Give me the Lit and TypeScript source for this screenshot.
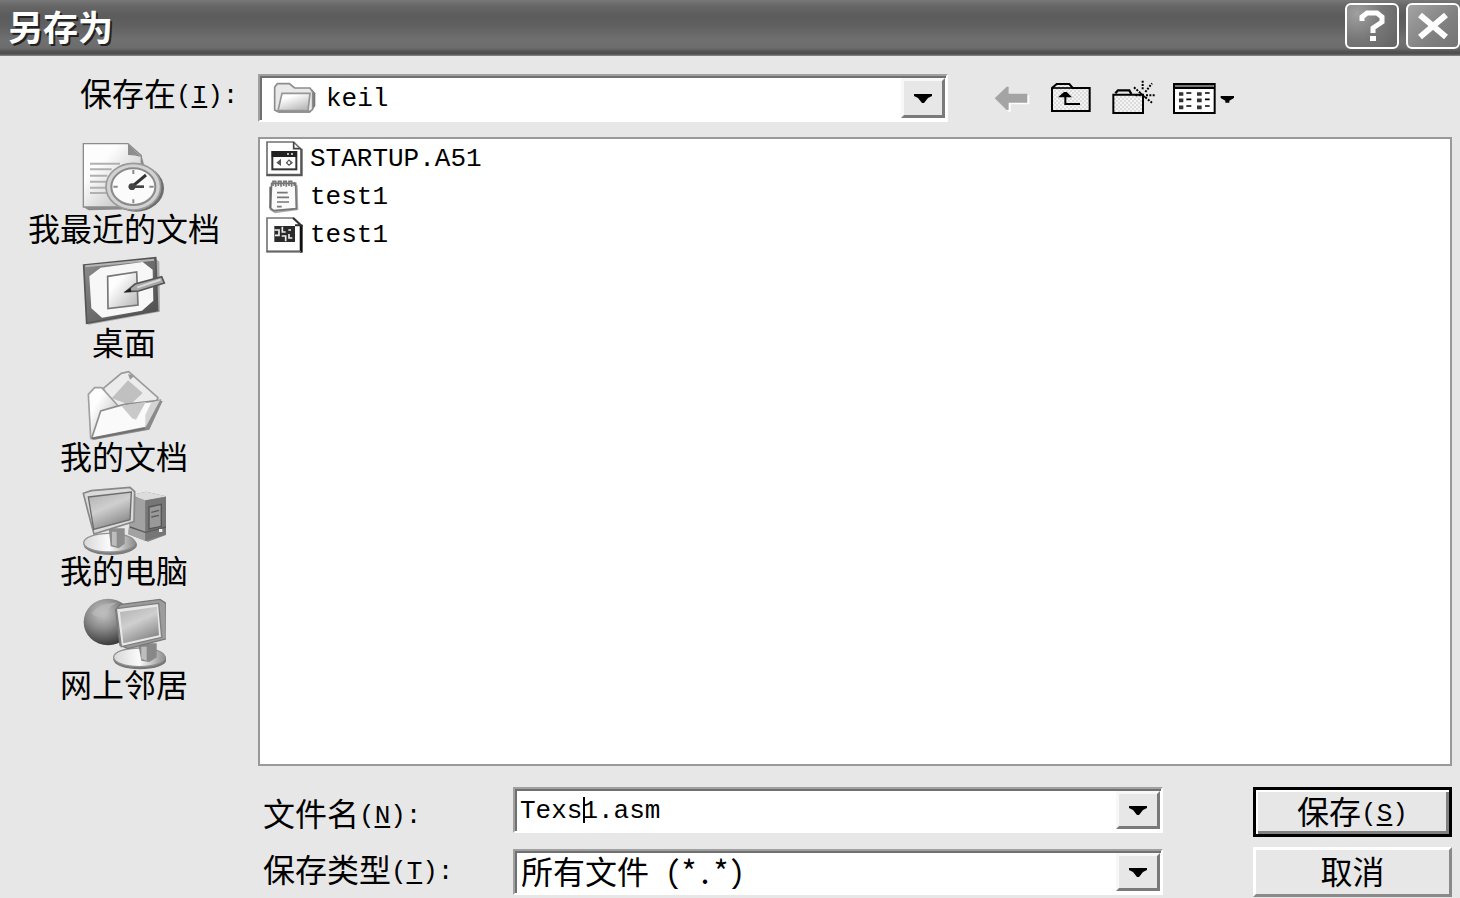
import { LitElement, html, svg, css } from "lit";
import { customElement, property } from "lit/decorators.js";

const shades = svg`
  <defs>
    <linearGradient id="paper" x1="0" y1="0" x2="1" y2="1"><stop offset="0.3" stop-color="#fdfdfd"/><stop offset="1" stop-color="#b4b4b4"/></linearGradient>
    <linearGradient id="screen" x1="0" y1="0" x2="0.5" y2="1"><stop offset="0" stop-color="#b0b0b0"/><stop offset="0.5" stop-color="#cfcfcf"/><stop offset="1" stop-color="#8c8c8c"/></linearGradient>
    <linearGradient id="metal" x1="0" y1="0" x2="1" y2="0"><stop offset="0" stop-color="#d8d8d8"/><stop offset="0.5" stop-color="#fafafa"/><stop offset="1" stop-color="#8e8e8e"/></linearGradient>
    <radialGradient id="globe" cx="0.4" cy="0.3" r="0.7"><stop offset="0" stop-color="#c8c8c8"/><stop offset="0.5" stop-color="#8a8a8a"/><stop offset="1" stop-color="#3c3c3c"/></radialGradient>
    <linearGradient id="pad" x1="0" y1="0" x2="1" y2="1"><stop offset="0" stop-color="#8e8e8e"/><stop offset="1" stop-color="#4a4a4a"/></linearGradient>
    <pattern id="dots" width="12" height="12" patternUnits="userSpaceOnUse"><rect width="12" height="12" fill="#f4f4f4"/><rect width="6" height="6" fill="#dcdcdc"/><rect x="6" y="6" width="6" height="6" fill="#dcdcdc"/></pattern>
  </defs>`;

const recentIcon = html`<svg viewBox="186 21 252 216" width="84" height="72" aria-hidden="true">${shades}
  <path d="M194 218 L194 30 L324 27 L366 66 L374 96 L374 222 L206 226 Z" fill="#8a8a8a"/>
  <path d="M190 216 V26 H324 L364 62 V216 Z" fill="url(#paper)" stroke="#8c8c8c" stroke-width="4"/>
  <path d="M324 28 V60 Q345 60 364 66 Z" fill="#8d8d8d"/>
  <path d="M210 86 H300 M210 103 H275 M210 122 H262 M210 140 H258 M210 158 H258 M210 174 H262" stroke="#b0b0b0" stroke-width="6"/>
  <ellipse cx="348" cy="160" rx="84" ry="70" fill="#6e6e6e"/>
  <ellipse cx="340" cy="155" rx="82" ry="70" fill="#d2d2d2" stroke="#9a9a9a" stroke-width="5"/>
  <ellipse cx="340" cy="155" rx="66" ry="55" fill="#fbfbfb" stroke="#8a8a8a" stroke-width="6"/>
  <path d="M340 105 V117 M340 193 V205 M280 155 H293 M388 155 H401" stroke="#8a8a8a" stroke-width="6"/>
  <path d="M336 155 L378 120" stroke="#333" stroke-width="9"/><path d="M326 155 H372" stroke="#444" stroke-width="8"/>
  <circle cx="336" cy="155" r="10" fill="#444"/></svg>`;

const desktopIcon = html`<svg viewBox="186 363 252 216" width="84" height="72" aria-hidden="true">
  <path d="M202 570 L420 530 L418 380 L406 370 Z" fill="#aaa"/>
  <path d="M191 390 L407 368 L413 527 L200 565 Z" fill="url(#pad)" stroke="#555" stroke-width="5"/>
  <path d="M196 394 L402 374" stroke="#b5b5b5" stroke-width="6"/>
  <path d="M242 398 L368 381 L398 404 L400 497 L366 527 L246 548 L214 520 L208 424 Z" fill="#f7f7f7"/>
  <path d="M263 424 L350 411 L354 510 L264 521 Z" fill="url(#paper)" stroke="#777" stroke-width="5"/>
  <path d="M318 470 L345 447 L425 425 L433 444 L356 468 Z" fill="#a9a9a9" stroke="#555" stroke-width="5"/>
  <path d="M352 457 L422 434" stroke="#ddd" stroke-width="5"/><path d="M311 472 L332 459 L334 471 Z" fill="#222"/></svg>`;

const documentsIcon = html`<svg viewBox="186 15 252 216" width="84" height="72" aria-hidden="true">
  <path d="M216 226 L388 194 L428 108 L413 106 Z" fill="#8a8a8a"/>
  <path d="M250 70 L304 25 L326 20 L414 98 L374 190 L290 190 Z" fill="#ececec" stroke="#9a9a9a" stroke-width="5"/>
  <path d="M275 100 L324 46 L368 84 L330 120 Z" fill="#c0c0c0"/>
  <path d="M324 27 L344 32 L330 44 Z" fill="#999"/>
  <path d="M205 88 L224 68 L245 68 L292 120 L290 190 L212 218 Z" fill="url(#paper)" stroke="#a0a0a0" stroke-width="5"/>
  <path d="M215 220 L242 138 L290 124 L314 118 L420 106 L376 188 Z" fill="#fafafa" stroke="#8e8e8e" stroke-width="5"/>
  <path d="M304 122 L378 110 L348 164 L336 160 Z" fill="#c9c9c9"/>
  <path d="M420 106 L376 188 L376 150 L394 112 Z" fill="#d4d4d4"/><path d="M216 221 L376 190" stroke="#707070" stroke-width="5"/></svg>`;

const computerIcon = html`<svg viewBox="186 357 252 216" width="84" height="72" aria-hidden="true">
  <path d="M335 390 L378 380 L439 394 L438 510 L384 530 L325 508 Z" fill="#8a8a8a"/>
  <path d="M335 390 L378 380 L439 394 L376 407 Z" fill="#dcdcdc"/>
  <path d="M335 393 L376 406 V528 L325 508 Z" fill="#a2a2a2"/><path d="M376 406 L439 395 V508 L376 528 Z" fill="#767676"/>
  <path d="M387 426 L424 418 V484 L387 492 Z" fill="#999" stroke="#555" stroke-width="4"/><path d="M394 442 L417 436 M394 456 L417 451 M330 486 L376 502 L438 486" stroke="#5b5b5b" stroke-width="4" fill="none"/>
  <rect x="417" y="492" width="10" height="9" fill="#eee"/>
  <ellipse cx="271" cy="539" rx="80" ry="31" fill="#7d7d7d"/><ellipse cx="268" cy="533" rx="77" ry="28" fill="url(#metal)" stroke="#929292" stroke-width="4"/>
  <path d="M266 490 H314 V536 L296 550 L272 544 Z" fill="#8c8c8c"/><path d="M276 500 H290 V544 L276 540 Z" fill="#bdbdbd"/>
  <path d="M190 385 L214 377 L330 367 L344 380 L342 470 L222 507 L204 440 Z" fill="#dadada" stroke="#888" stroke-width="5"/>
  <path d="M205 396 L334 381 L330 464 L221 493 Z" fill="url(#screen)" stroke="#6c6c6c" stroke-width="4"/></svg>`;

const networkIcon = html`<svg viewBox="186 24 252 216" width="84" height="72" aria-hidden="true">
  <ellipse cx="264" cy="96" rx="73" ry="70" fill="url(#globe)"/>
  <path d="M215 70 Q240 36 290 38 Q262 52 262 72 Q236 92 215 70 Z" fill="#b9b9b9" opacity="0.7"/>
  <ellipse cx="360" cy="208" rx="80" ry="30" fill="#777"/><ellipse cx="358" cy="202" rx="77" ry="28" fill="url(#metal)" stroke="#929292" stroke-width="4"/>
  <path d="M354 160 H410 V202 L388 216 L364 212 Z" fill="#888"/><path d="M364 170 H380 V212 L364 206 Z" fill="#bdbdbd"/>
  <path d="M287 60 L300 44 L420 28 L438 40 L440 146 L324 176 L300 166 Z" fill="#9c9c9c" stroke="#777" stroke-width="4"/>
  <path d="M289 56 L416 40 L425 142 L304 170 Z" fill="#e8e8e8" stroke="#808080" stroke-width="4"/>
  <path d="M300 66 L411 50 L417 136 L310 160 Z" fill="url(#screen)"/></svg>`;

const folderIcon = html`<svg class="folder" viewBox="816 240 138 108" width="46" height="36" aria-hidden="true">
  <path d="M832 338 H930 L946 318 V280 L936 268 Z" fill="#777"/>
  <path d="M824 330 V262 L832 251 H868 L884 264 H930 L938 276 V328 L930 334 H832 Z" fill="#e9e9e9" stroke="#8c8c8c" stroke-width="5"/>
  <path d="M834 332 L846 280 H930 L924 332 Z" fill="url(#folderface)" stroke="#969696" stroke-width="5"/>
  <defs><linearGradient id="folderface" x1="0" y1="0" x2="0.6" y2="1"><stop offset="0.3" stop-color="#fff"/><stop offset="1" stop-color="#bcbcbc"/></linearGradient></defs></svg>`;

const sourceIcon = html`<svg viewBox="30 30 114 114" width="38" height="38" aria-hidden="true">
  <path d="M36 36 H116 L138 58 V134 H36 Z" fill="#fff" stroke="#707070" stroke-width="5"/><path d="M116 36 V56 H138" fill="none" stroke="#444" stroke-width="5"/><path d="M140 56 V136 H34" stroke="#555" stroke-width="6" fill="none"/>
  <rect x="52" y="66" width="72" height="52" fill="#fff" stroke="#333" stroke-width="6"/><rect x="50" y="63" width="76" height="18" fill="#222"/>
  <path d="M96 72 H102 M108 72 H114" stroke="#eee" stroke-width="4"/>
  <path d="M78 86 V108 L64 98 Z M92 98 L102 88 L114 98 L102 108 Z" fill="#555"/><circle cx="102" cy="98" r="4" fill="#fff"/></svg>`;

const notepadIcon = html`<svg viewBox="30 144 114 114" width="38" height="38" aria-hidden="true">
  <path d="M48 168 L128 166 L130 240 L60 250 L44 240 Z" fill="#aaa"/>
  <path d="M50 160 H122 L124 236 L56 242 L46 234 Z" fill="#fafafa" stroke="#777" stroke-width="5"/><path d="M46 170 V234" stroke="#666" stroke-width="6"/>
  <path d="M54 168 V154 H62 V170 M70 168 V154 H78 V170 M86 168 V154 H94 V170 M102 168 V154 H110 V170 M118 168 V156" fill="none" stroke="#777" stroke-width="5"/>
  <path d="M66 188 H98 M66 202 H102 M66 216 H102 M66 230 H80" stroke="#777" stroke-width="5"/></svg>`;

const asmIcon = html`<svg viewBox="30 258 114 114" width="38" height="38" aria-hidden="true">
  <path d="M36 264 H116 L136 284 V364 H36 Z" fill="#fff" stroke="#777" stroke-width="5"/><path d="M139 284 V368" stroke="#111" stroke-width="8" fill="none"/><path d="M34 365 H138" stroke="#666" stroke-width="5"/><path d="M114 264 L138 286 H120" fill="none" stroke="#333" stroke-width="6"/>
  <rect x="58" y="288" width="62" height="48" fill="#2b2b2b"/>
  <path d="M58 300 H72 V316 H60 M82 290 V306 H92 M100 300 H108 M80 318 H92 V334 M102 312 V324 H112" fill="none" stroke="#eee" stroke-width="5"/></svg>`;

const backIcon = html`<svg viewBox="402 60 114 105" width="38" height="35" aria-hidden="true">
  <path d="M410 120 L446 86 V106 H508 V133 H452 V155 H446 Z" fill="#fff"/><path d="M404 115 L440 80 H446 V101 H502 V128 H446 V150 H440 Z" fill="#a4a4a4"/></svg>`;
const upIcon = html`<svg viewBox="570 60 126 105" width="42" height="35" aria-hidden="true">${shades}
  <path d="M576 153 V84 L590 72 H628 L638 84 H689 V153 Z" fill="url(#dots)" stroke="#000" stroke-width="6"/><path d="M576 84 H638" stroke="#000" stroke-width="5"/>
  <path d="M616 106 V132 H660" fill="none" stroke="#000" stroke-width="6"/><path d="M594 112 L612 96 H620 L636 112 Z" fill="#000"/></svg>`;
const newFolderIcon = html`<svg viewBox="750 60 135 105" width="45" height="35" aria-hidden="true">${shades}
  <path d="M760 159 V104 H849 V159 Z" fill="url(#dots)" stroke="#000" stroke-width="6"/><path d="M766 100 L774 91 H808 L814 102" fill="none" stroke="#000" stroke-width="7"/>
  <path d="M848 62 V90 M822 82 L840 98 M826 106 H842 M856 96 L876 70 M858 106 H884 M856 112 L876 128" stroke="#000" stroke-width="6" stroke-dasharray="6 4"/><path d="M838 96 L858 114" stroke="#000" stroke-width="5"/></svg>`;
const viewsIcon = html`<svg viewBox="939 60 189 105" width="63" height="35" aria-hidden="true">
  <rect x="942" y="72" width="122" height="87" fill="#fff" stroke="#000" stroke-width="6"/><rect x="945" y="75" width="116" height="7" fill="#777"/><rect x="942" y="81" width="122" height="6" fill="#000"/>
  <path d="M957 102 H970 M957 121 H970 M957 142 H970 M1011 102 H1025 M1011 121 H1025 M1011 142 H1025" stroke="#333" stroke-width="11"/>
  <path d="M979 99 H994 M979 118 H994 M979 138 H994 M1035 99 H1049 M1035 118 H1049 M1035 138 H1049" stroke="#000" stroke-width="5"/>
  <path d="M1082 108 H1122 V114 L1108 122 V128 H1096 V122 L1082 114 Z" fill="#000"/></svg>`;

const arrow = html`<span class="drop" aria-hidden="true"><svg viewBox="0 0 18 9" width="18" height="9"><path d="M0 0 H18 V2 L14 4 L10 9 H8 L4 4 L0 2 Z" fill="#000"/></svg></span>`;

const base = css`
  * { box-sizing: border-box; }
  .latin { font-family: "Liberation Mono", monospace; font-size: 26px; line-height: 1; }
  label .latin, button .latin { vertical-align: 3px; }
  button, select, input { color: #000; font-family: inherit; }
`;

@customElement("places-bar")
class PlacesBar extends LitElement {
  static styles = [base, css`
    :host { display: block; width: 248px; }
    .places { display: flex; flex-direction: column; gap: 16px; }
    .place { display: flex; flex-direction: column; align-items: center; padding: 0; border: 0; background: none; font-size: 32px; line-height: 26px; white-space: nowrap; }
    svg { display: block; }
    .defs { position: absolute; }
  `];
  private places = [
    { name: "我最近的文档", icon: recentIcon },
    { name: "桌面", icon: desktopIcon },
    { name: "我的文档", icon: documentsIcon },
    { name: "我的电脑", icon: computerIcon },
    { name: "网上邻居", icon: networkIcon },
  ];
  render() {
    return html`<svg class="defs" width="0" height="0">${shades}</svg>
      <nav class="places">${this.places.map((p) => html`<button class="place">${p.icon}<span>${p.name}</span></button>`)}</nav>`;
  }
}

@customElement("file-list")
class FileList extends LitElement {
  static styles = [base, css`
    :host { display: block; background: #fff; border: 2px solid #999; padding: 1px 5px; }
    .files { list-style: none; margin: 0; padding: 0; }
    .file { display: flex; align-items: center; gap: 7px; height: 38px; }
  `];
  private files = [
    { name: "STARTUP.A51", icon: sourceIcon },
    { name: "test1", icon: notepadIcon },
    { name: "test1", icon: asmIcon },
  ];
  render() {
    return html`<ul class="files">${this.files.map((f) => html`<li class="file">${f.icon}<span class="latin">${f.name}</span></li>`)}</ul>`;
  }
}

@customElement("app-root")
class AppRoot extends LitElement {
  @property() fileName = "Texs1.asm";

  static styles = [base, css`
    :host { display: flex; flex-direction: column; min-height: 100vh; background: #e7e7e7; color: #000; font-family: "Noto Sans CJK SC", sans-serif; font-size: 32px; }
    .title { display: flex; align-items: center; height: 56px; padding: 0 0 4px 8px; gap: 7px; background: linear-gradient(#787878 0, #666 6px, #5c5c5c 16px, #606060 26px, #707070 40px, #6c6c6c 48px, #505050 52px, #505050 54px, #8c8c8c 56px); }
    .title h1 { flex: 1; margin: 0; color: #fff; font-size: 35px; line-height: 52px; font-weight: 700; text-shadow: 2px 2px 0 #222; }
    .caption { display: flex; align-items: center; justify-content: center; width: 54px; height: 46px; padding: 0; border: 2px solid #fff; border-radius: 6px; background: radial-gradient(circle at 20% 20%, #a0a0a0, #777 50%, #626262); }
    .caption.close { background: linear-gradient(135deg, #a4a4a4, #808080 60%, #747474); }
    .lookin { display: flex; align-items: flex-start; padding-top: 18px; }
    .lookin label { width: 258px; padding-left: 80px; line-height: 36px; white-space: nowrap; }
    .lookin .combo { flex: 1; }
    .tools { display: flex; gap: 18px; padding: 6px 0 0; margin: 0 224px 0 46px; }
    .tool { display: block; padding: 0; border: 0; background: none; }
    .tool svg { display: block; }
    .body { flex: 1; display: flex; padding: 15px 8px 0 0; gap: 10px; }
    places-bar { padding-top: 5px; }
    file-list { flex: 1; }
    .form { display: grid; grid-template-columns: 250px 1fr 199px; padding: 21px 8px 1px 263px; }
    .labels { display: flex; flex-direction: column; gap: 6px; line-height: 50px; white-space: nowrap; }
    .fields { display: flex; flex-direction: column; gap: 16px; margin: 0 90px 0 0; }
    .actions { display: flex; flex-direction: column; gap: 10px; }
    .combo { display: grid; grid-template: minmax(0, 1fr) / 1fr 45px; height: 46px; background: #fff; border: 2px solid; border-color: #a0a0a0 #fff #fff #a0a0a0; box-shadow: inset 2px 2px 0 #707070; }
    .combo.large { height: 48px; }
    .combo select, .combo input { grid-area: 1 / 1 / 2 / 3; width: 100%; min-width: 0; height: 100%; margin: 0; padding: 2px 48px 0 5px; border: 0; outline: 0; border-radius: 0; background: none; appearance: none; }
    .combo .folderselect { padding-left: 66px; }
    .combo .wide { font-family: "Noto Sans Mono CJK SC", "Noto Sans CJK SC", sans-serif; font-size: 32px; line-height: 38px; padding: 0 48px 4px 6px; }
    .folder { grid-area: 1 / 1; align-self: center; margin-left: 12px; pointer-events: none; }
    .drop { grid-area: 1 / 2; display: flex; align-items: center; justify-content: center; margin: 2px 1px 2px 0; background: #e7e7e7; border: 3px solid; border-color: #f8f8f8 #7a7a7a #7a7a7a #f8f8f8; pointer-events: none; }
    .caret { grid-area: 1 / 1; align-self: center; width: 2px; height: 26px; margin-left: calc(6px + 4ch); background: #000; pointer-events: none; }
    .push { height: 50px; padding: 0 0 4px; border: 3px solid; border-color: #fff #8a8a8a #8a8a8a #fff; background: #e7e7e7; font-size: 32px; line-height: 40px; }
    .push.default { border-color: #000; box-shadow: inset 2px 2px 0 #fff, inset -3px -3px 0 #808080; }
    u { text-decoration-thickness: 2px; text-underline-offset: 3px; }
  `];

  render() {
    return html`
      <header class="title"><h1>另存为</h1>
        <button class="caption" aria-label="帮助"><svg viewBox="0 0 28 32" width="28" height="32"><path d="M4 11 V7 L9 3 H19 L24 7 V12 L15 18 V23" fill="none" stroke="#fff" stroke-width="5"/><rect x="12" y="26" width="6" height="5" fill="#fff"/></svg></button>
        <button class="caption close" aria-label="关闭"><svg viewBox="0 0 32 28" width="32" height="28"><path d="M3 3 L29 25 M29 3 L3 25" stroke="#fff" stroke-width="6"/></svg></button>
      </header>
      <div class="lookin">
        <label for="dir">保存在<span class="latin">(<u>I</u>):</span></label>
        <div class="combo large">${folderIcon}<select id="dir" class="latin folderselect"><option>keil</option></select>${arrow}</div>
        <div class="tools">
          <button class="tool" aria-label="后退" disabled>${backIcon}</button>
          <button class="tool" aria-label="向上一级">${upIcon}</button>
          <button class="tool" aria-label="新建文件夹">${newFolderIcon}</button>
          <button class="tool" aria-label="查看">${viewsIcon}</button>
        </div>
      </div>
      <div class="body"><places-bar></places-bar><file-list></file-list></div>
      <form class="form" @submit=${(e: Event) => e.preventDefault()}>
        <div class="labels">
          <label for="name">文件名<span class="latin">(<u>N</u>):</span></label>
          <label for="type">保存类型<span class="latin">(<u>T</u>):</span></label>
        </div>
        <div class="fields">
          <div class="combo"><input id="name" class="latin" .value=${this.fileName} autocomplete="off"><span class="caret latin"></span>${arrow}</div>
          <div class="combo"><select id="type" class="wide"><option>所有文件 (*.*)</option></select>${arrow}</div>
        </div>
        <div class="actions">
          <button class="push default" type="submit">保存<span class="latin">(<u>S</u>)</span></button>
          <button class="push" type="button">取消</button>
        </div>
      </form>`;
  }
}
